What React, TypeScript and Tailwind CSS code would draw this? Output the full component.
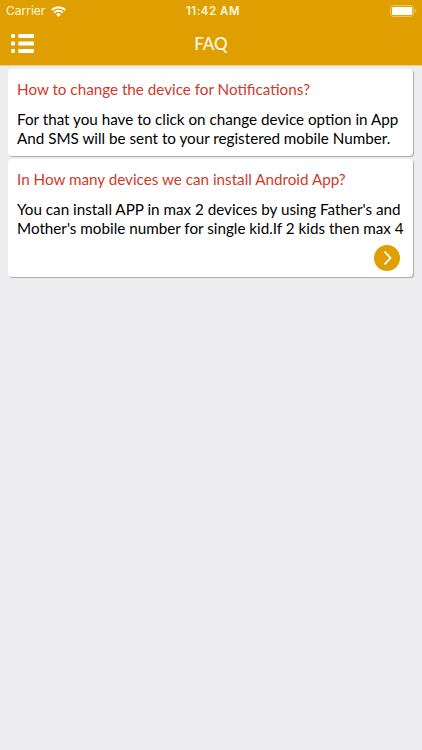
import React from "react";

interface FaqItem {
  question: string;
  lines: string[];
  more?: boolean;
}

const faqs: FaqItem[] = [
  {
    question: "How to change the device for Notifications?",
    lines: [
      "For that you have to click on change device option in App",
      "And SMS will be sent to your registered mobile Number.",
    ],
  },
  {
    question: "In How many devices we can install Android App?",
    lines: [
      "You can install APP in max 2 devices by using Father's and",
      "Mother's mobile number for single kid.If 2 kids then max 4",
    ],
    more: true,
  },
];

const StatusBar = () => {
  return (
    <div className="grid h-[22px] grid-cols-3 items-center pr-[5px] pl-[6px] font-['Inter',sans-serif] text-[12px] leading-[22px] text-[#fff8df]">
      <div className="flex items-center gap-[6px]">
        <span>Carrier</span>
        <svg width="15" height="11" viewBox="0 0 15 11" fill="none">
          <path d="M.8 4.1a9.5 9.5 0 0 1 13.4 0" stroke="#fff" strokeWidth="2.1" />
          <path d="M3.2 6.6a6.1 6.1 0 0 1 8.6 0" stroke="#fff" strokeWidth="2" />
          <path d="M7.5 10.7 5.1 8.4a3.4 3.4 0 0 1 4.8 0z" fill="#fff" />
        </svg>
      </div>
      <span className="pl-[3px] text-center text-[11.5px] font-semibold tracking-[0.5px] whitespace-nowrap">
        11:42 AM
      </span>
      <svg className="justify-self-end" width="27" height="12" viewBox="0 0 27 12">
        <rect x="0.6" y="0.6" width="23" height="10.8" rx="2.5" fill="none" stroke="#f0c863" />
        <rect x="2" y="2" width="20.2" height="8" rx="1" fill="#fff" />
        <path d="M25 4v4c1.8-.6 1.8-3.4 0-4z" fill="#f0c863" />
      </svg>
    </div>
  );
};

const FaqCard = ({ item }: { item: FaqItem }) => {
  return (
    <li className="rounded-[4px] bg-white pt-[9.5px] pb-[9px] pl-[9px] shadow-[1px_1px_1px_#a9a9ab]">
      <h2 className="origin-left scale-x-[0.951] text-[16px] leading-[20px] whitespace-nowrap text-[#cf3a2b]">
        {item.question}
      </h2>
      <div className="mt-[11.5px] origin-left scale-x-[0.951] text-[16px] leading-[18.5px] whitespace-nowrap text-black">
        {item.lines.map((line) => (
          <p key={line}>{line}</p>
        ))}
      </div>
      {item.more && (
        <div className="mt-[8px] -mb-[3px] flex justify-end pr-[13px]">
          <button className="flex size-[26px] items-center justify-center rounded-full bg-[#df9f00]">
            <svg width="26" height="26" viewBox="0 0 26 26" fill="none" stroke="#fff" strokeWidth="1.8">
              <path d="m10.5 6.7 6 6.3-6 6.3" />
            </svg>
          </button>
        </div>
      )}
    </li>
  );
};

const App = () => {
  return (
    <div className="flex h-[750px] w-[422px] flex-col overflow-hidden bg-[#ededef] font-['Lato','Liberation_Sans',sans-serif]">
      <header className="h-[66px] border-b border-[#f0cf80] bg-[#df9f00]">
        <StatusBar />
        <div className="grid h-[43px] grid-cols-3 items-center">
          <button className="pl-[11px]">
            <svg width="24" height="20" viewBox="0 0 24 20" fill="#fff">
              <rect x="0" y="0" width="4" height="4" rx="1.3" />
              <rect x="7.3" y="0" width="15.7" height="4" rx="0.8" />
              <rect x="0" y="7.5" width="4" height="4" rx="1.3" />
              <rect x="7.3" y="7.5" width="15.7" height="4" rx="0.8" />
              <rect x="0" y="15" width="4" height="4" rx="1.3" />
              <rect x="7.3" y="15" width="15.7" height="4" rx="0.8" />
            </svg>
          </button>
          <h1 className="text-center text-[17px] font-medium text-[#fffbe9]">FAQ</h1>
        </div>
      </header>
      <ul className="flex flex-col gap-[3px] pt-[3px] pr-[9px] pl-[8px]">
        {faqs.map((item) => (
          <FaqCard key={item.question} item={item} />
        ))}
      </ul>
    </div>
  );
};

export default App;
